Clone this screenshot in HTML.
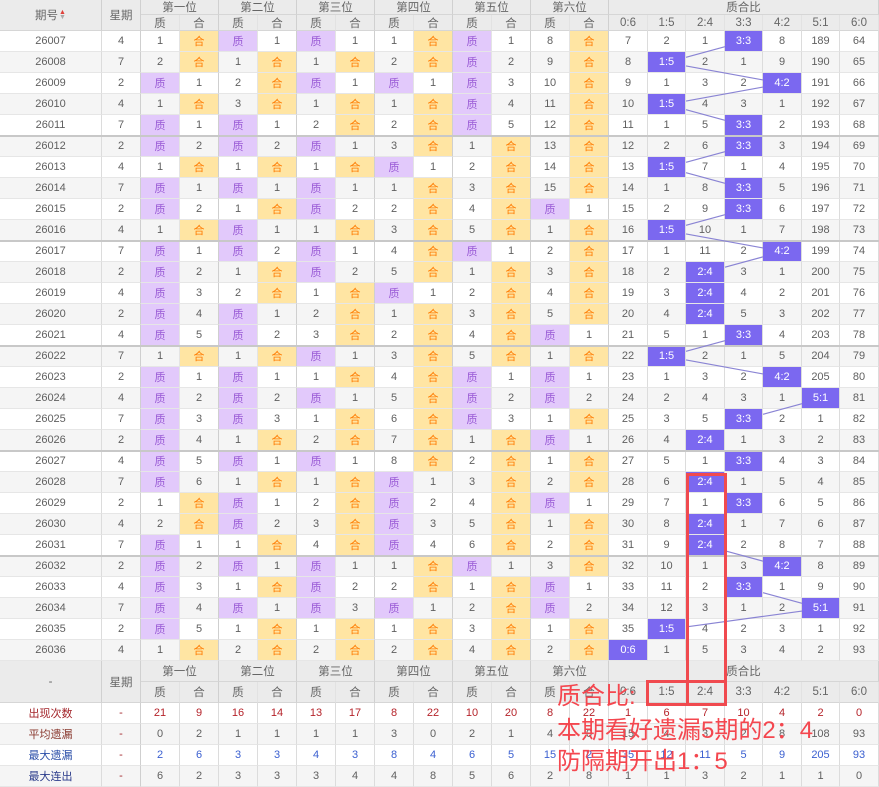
<!DOCTYPE html>
<html><head><meta charset="utf-8">
<style>
html,body{margin:0;padding:0;background:#fff;}
body{width:879px;height:787px;position:relative;overflow:hidden;font-family:"Liberation Sans","Noto Sans CJK SC",sans-serif;font-size:11px;color:#606060;}
.c{position:absolute;box-sizing:border-box;border-right:1px solid #dcdcdc;border-bottom:1px solid #e6e6e6;display:flex;align-items:center;justify-content:center;white-space:nowrap;}
.h{background:#ebebeb;color:#666;font-size:11.5px;border-right:1px solid #d0d0d0;border-bottom:1px solid #d6d6d6;}
.z{background:#e2c9fb;color:#9a5bd6;}
.o{background:#ffe5a3;color:#ff7b00;}
.b{background:#7b68f0;color:#fff;}
.ov{position:absolute;color:#f4474f;font-size:24px;line-height:33px;font-family:"Liberation Sans","Noto Sans CJK SC",sans-serif;white-space:nowrap;}
.box{position:absolute;border:3px solid #f04a4f;box-sizing:border-box;}
</style></head><body>
<div id="root"></div>
<svg id="sv" width="879" height="787" style="position:absolute;left:0;top:0;pointer-events:none"></svg>
<div class="box" style="left:686px;top:473px;width:41px;height:233px"></div>
<div class="box" style="left:646px;top:680px;width:81px;height:26px"></div>
<div class="ov" style="left:557px;top:680px">质合比:</div>
<div class="ov" style="left:557px;top:714px">本期看好遗漏5期的2：4</div>
<div class="ov" style="left:557px;top:745px">防隔期开出1：5</div>
<script>
var X=[0,102,141,180,219,258,297,336,375,414,453,492,531,570,609,648,686,725,763,802,840,879];
var root=document.getElementById('root');var html='';
function cell(x0,x1,y0,y1,t,cls,st){html+='<div class="c '+(cls||'')+'" style="left:'+x0+'px;top:'+y0+'px;width:'+(x1-x0)+'px;height:'+(y1-y0)+'px;'+(st||'')+'">'+t+'</div>';}
var pos=['第一位','第二位','第三位','第四位','第五位','第六位'];
var rl=['0:6','1:5','2:4','3:3','4:2','5:1','6:0'];
function header(y0,first){
 var y1=y0+(first?15:21),y2=first?31:y0+42;
 cell(0,102,y0,y2,first?'期号<span style="display:inline-block;margin-left:1px;font-size:7px;line-height:5px;vertical-align:middle"><span style="color:#e0403a">▲</span><br><span style="color:#aaa">▼</span></span>':'-','h');
 cell(102,141,y0,y2,'星期','h');
 for(var p=0;p<6;p++){cell(X[2+2*p],X[4+2*p],y0,y1,pos[p],'h');cell(X[2+2*p],X[3+2*p],y1,y2,'质','h','border-right-color:#e2e2e2');cell(X[3+2*p],X[4+2*p],y1,y2,'合','h');}
 cell(609,879,y0,y1,'质合比','h');
 for(var k=0;k<7;k++)cell(X[14+k],X[15+k],y1,y2,rl[k],'h','border-right-color:#e2e2e2');
}
header(0,true);
var D=[
['26007',4,'1H Z1 Z1 1H Z1 8H',[7,2,1,0,8,189,64],3],
['26008',7,'2H 1H 1H 2H Z2 9H',[8,0,2,1,9,190,65],1],
['26009',2,'Z1 2H Z1 Z1 Z3 10H',[9,1,3,2,0,191,66],4],
['26010',4,'1H 3H 1H 1H Z4 11H',[10,0,4,3,1,192,67],1],
['26011',7,'Z1 Z1 2H 2H Z5 12H',[11,1,5,0,2,193,68],3],
['26012',2,'Z2 Z2 Z1 3H 1H 13H',[12,2,6,0,3,194,69],3],
['26013',4,'1H 1H 1H Z1 2H 14H',[13,0,7,1,4,195,70],1],
['26014',7,'Z1 Z1 Z1 1H 3H 15H',[14,1,8,0,5,196,71],3],
['26015',2,'Z2 1H Z2 2H 4H Z1',[15,2,9,0,6,197,72],3],
['26016',4,'1H Z1 1H 3H 5H 1H',[16,0,10,1,7,198,73],1],
['26017',7,'Z1 Z2 Z1 4H Z1 2H',[17,1,11,2,0,199,74],4],
['26018',2,'Z2 1H Z2 5H 1H 3H',[18,2,0,3,1,200,75],2],
['26019',4,'Z3 2H 1H Z1 2H 4H',[19,3,0,4,2,201,76],2],
['26020',2,'Z4 Z1 2H 1H 3H 5H',[20,4,0,5,3,202,77],2],
['26021',4,'Z5 Z2 3H 2H 4H Z1',[21,5,1,0,4,203,78],3],
['26022',7,'1H 1H Z1 3H 5H 1H',[22,0,2,1,5,204,79],1],
['26023',2,'Z1 Z1 1H 4H Z1 Z1',[23,1,3,2,0,205,80],4],
['26024',4,'Z2 Z2 Z1 5H Z2 Z2',[24,2,4,3,1,0,81],5],
['26025',7,'Z3 Z3 1H 6H Z3 1H',[25,3,5,0,2,1,82],3],
['26026',2,'Z4 1H 2H 7H 1H Z1',[26,4,0,1,3,2,83],2],
['26027',4,'Z5 Z1 Z1 8H 2H 1H',[27,5,1,0,4,3,84],3],
['26028',7,'Z6 1H 1H Z1 3H 2H',[28,6,0,1,5,4,85],2],
['26029',2,'1H Z1 2H Z2 4H Z1',[29,7,1,0,6,5,86],3],
['26030',4,'2H Z2 3H Z3 5H 1H',[30,8,0,1,7,6,87],2],
['26031',7,'Z1 1H 4H Z4 6H 2H',[31,9,0,2,8,7,88],2],
['26032',2,'Z2 Z1 Z1 1H Z1 3H',[32,10,1,3,0,8,89],4],
['26033',4,'Z3 1H Z2 2H 1H Z1',[33,11,2,0,1,9,90],3],
['26034',7,'Z4 Z1 Z3 Z1 2H Z2',[34,12,3,1,2,0,91],5],
['26035',2,'Z5 1H 1H 1H 3H 1H',[35,0,4,2,3,1,92],1],
['26036',4,'1H 2H 2H 2H 4H 2H',[0,1,5,3,4,2,93],0]
];
var his=[];
for(var i=0;i<D.length;i++){
 var y0=31+21*i,y1=y0+21,r=D[i],bg=(i%2?'background:#f5f5f5;':'background:#fff;');
 cell(0,102,y0,y1,r[0],'',bg);cell(102,141,y0,y1,r[1],'',bg+'border-right-color:#cfcfcf;');
 var ps=r[2].split(' ');
 for(var p=0;p<6;p++){var s=ps[p];
  if(s[0]=='Z'){cell(X[2+2*p],X[3+2*p],y0,y1,'质','z','border-right-color:#e4e4e4');cell(X[3+2*p],X[4+2*p],y0,y1,s.slice(1),'',bg+'border-right-color:#cfcfcf;');}
  else{cell(X[2+2*p],X[3+2*p],y0,y1,s.slice(0,-1),'',bg+'border-right-color:#e4e4e4;');cell(X[3+2*p],X[4+2*p],y0,y1,'合','o','border-right-color:#cfcfcf');}
 }
 for(var k=0;k<7;k++){ if(k==r[4])cell(X[14+k],X[15+k],y0,y1,rl[k],'b');else cell(X[14+k],X[15+k],y0,y1,r[3][k],'',bg);}
 his.push(r[4]);
}
for(var g=1;g<6;g++){html+='<div style="position:absolute;left:0;top:'+(31+105*g-1)+'px;width:879px;height:2px;background:#c8c8c8"></div>';}
header(661,false);
var S=[
['出现次数','color:#a3262b','color:#b5232a',['21','9','16','14','13','17','8','22','10','20','8','22','1','6','7','10','4','2','0']],
['平均遗漏','color:#8a3a30','',['0','2','1','1','1','1','3','0','2','1','4','0','15','4','3','2','8','108','93']],
['最大遗漏','color:#2a4ea8','color:#3a5fd0',['2','6','3','3','4','3','8','4','6','5','15','2','35','12','11','5','9','205','93']],
['最大连出','color:#2a3a8a','',['6','2','3','3','3','4','4','8','5','6','2','8','1','1','3','2','1','1','0']]
];
for(var s=0;s<4;s++){var y0=703+21*s,y1=y0+21,bg=(s%2?'background:#f5f5f5;':'background:#fff;');
 cell(0,102,y0,y1,S[s][0],'',bg+S[s][1]);cell(102,141,y0,y1,'-','',bg+'color:#a3262b;border-right-color:#cfcfcf');
 for(var k=0;k<19;k++)cell(X[2+k],X[3+k],y0,y1,S[s][3][k],'',bg+S[s][2]);
}
root.innerHTML=html;
var sv='';
for(var i=0;i<his.length-1;i++){var a=his[i],b=his[i+1];if(a==b)continue;
 var ax=(X[14+a]+X[15+a])/2,bx=(X[14+b]+X[15+b])/2,ay=31+21*i+10.5,by=ay+21;
 var sx,ex; if(b>a){sx=X[15+a];ex=X[14+b];}else{sx=X[14+a];ex=X[15+b];}
 var f=function(x){return ay+(by-ay)*(x-ax)/(bx-ax);};
 sv+='<line x1="'+sx+'" y1="'+f(sx)+'" x2="'+ex+'" y2="'+f(ex)+'" stroke="#8a84d4" stroke-width="1.2"/>';
}
document.getElementById('sv').innerHTML=sv;
</script>
</body></html>
